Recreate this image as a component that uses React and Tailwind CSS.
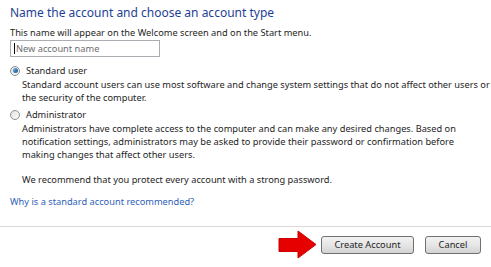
import React from "react";

function Radio({ checked }) {
  return (
    <span className="relative w-[10px] h-[10px] rounded-full border border-[#8e8f8f] bg-gradient-to-br from-[#e2e2e2] to-[#fbfbfb] flex items-center justify-center shrink-0">
      {checked && (
        <span className="w-[5px] h-[5px] rounded-full bg-gradient-to-br from-[#6fb5e8] to-[#1a4f8c]" />
      )}
    </span>
  );
}

function Arrow() {
  return (
    <svg width="40" height="30" viewBox="0 0 40 30" className="shrink-0">
      <polygon
        points="1,8.5 20,8.5 20,1 38,14.5 20,28 20,21.5 1,21.5"
        fill="#e60000"
        stroke="#c40000"
        strokeWidth="1"
      />
    </svg>
  );
}

export default function App() {
  return (
    <div
      className="w-[491px] h-[267px] bg-white flex flex-col overflow-hidden text-[#1e1e1e]"
      style={{ fontFamily: '"Noto Sans", "Open Sans", sans-serif' }}
    >
      {/* CONTENT */}
      <div className="flex-1 pl-[10px] pt-[4px] text-[9.25px] leading-[13px] whitespace-nowrap">
        <h1 className="text-[12px] leading-[18px] text-[#1e3f96]">
          Name the account and choose an account type
        </h1>
        <p className="mt-[4px]">
          This name will appear on the Welcome screen and on the Start menu.
        </p>
        <div className="mt-[1px] w-[150px] h-[17px] border border-[#abadb3] flex items-center pl-[3px]">
          <span className="w-px h-[11px] bg-black" />
          <span className="text-[#6d6d6d] ml-px">New account name</span>
        </div>

        {/* Standard user */}
        <div className="mt-[7px] flex items-center gap-[6px]">
          <Radio checked />
          <span>Standard user</span>
        </div>
        <p className="ml-[12px] mt-px">
          Standard account users can use most software and change system settings that do not affect other users or
          <br />
          the security of the computer.
        </p>

        {/* Administrator */}
        <div className="mt-[4px] flex items-center gap-[6px]">
          <Radio />
          <span>Administrator</span>
        </div>
        <p className="ml-[12px] mt-px">
          Administrators have complete access to the computer and can make any desired changes. Based on
          <br />
          notification settings, administrators may be asked to provide their password or confirmation before
          <br />
          making changes that affect other users.
        </p>
        <p className="ml-[12px] mt-[12px]">
          We recommend that you protect every account with a strong password.
        </p>

        <p className="mt-[9px] text-[#2f62b8]">
          Why is a standard account recommended?
        </p>
      </div>

      {/* BUTTON BAR */}
      <div className="h-[41px] border-t border-[#d9d9d9] flex items-start justify-end pt-[3px] pr-[10px]">
        <Arrow />
        <button className="ml-[3px] mt-[6px] w-[93px] h-[18px] rounded-[3px] border border-[#707070] bg-gradient-to-b from-[#f2f2f2] via-[#e6e6e6] to-[#d3d3d3] text-[9.25px] text-[#1e1e1e]">
          Create Account
        </button>
        <button className="ml-[11px] mt-[6px] w-[56px] h-[18px] rounded-[3px] border border-[#707070] bg-gradient-to-b from-[#f2f2f2] via-[#e6e6e6] to-[#d3d3d3] text-[9.25px] text-[#1e1e1e]">
          Cancel
        </button>
      </div>
    </div>
  );
}
